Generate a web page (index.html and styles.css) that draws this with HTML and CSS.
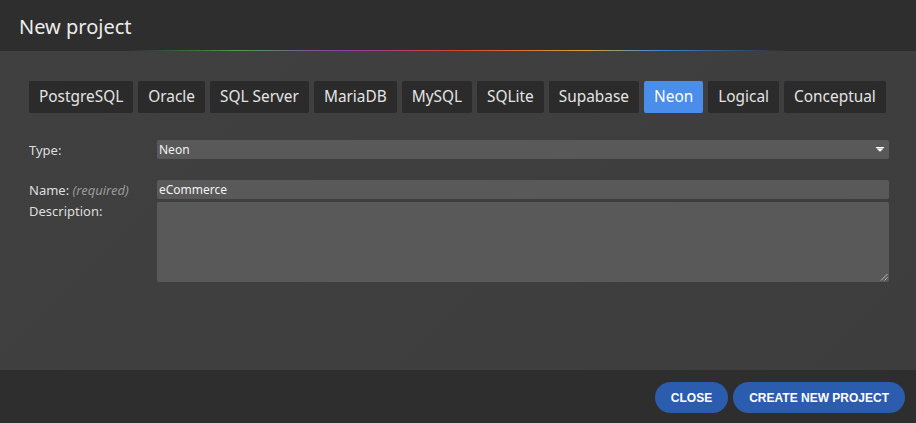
FILE: index.html
```html
<!DOCTYPE html>
<html lang="en">
<head>
<meta charset="utf-8">
<title>New project</title>
<link rel="stylesheet" href="styles.css">
</head>
<body>
<div class="dialog">
  <header class="header">
    <h1 class="title">New project</h1>
  </header>
  <div class="rainbow"></div>
  <main class="content">
    <nav class="tabs">
      <span class="tab">PostgreSQL</span>
      <span class="tab">Oracle</span>
      <span class="tab">SQL Server</span>
      <span class="tab">MariaDB</span>
      <span class="tab">MySQL</span>
      <span class="tab">SQLite</span>
      <span class="tab">Supabase</span>
      <span class="tab active">Neon</span>
      <span class="tab">Logical</span>
      <span class="tab">Conceptual</span>
    </nav>
    <div class="form">
      <div class="row type-row">
        <label class="label">Type:</label>
        <div class="select">
          <span class="select-value">Neon</span>
          <svg class="caret" width="8" height="5" viewBox="0 0 8 5"><rect x="0" y="0" width="8" height="1.2" fill="#fff"/><polygon points="0.5,1.5 7.5,1.5 4,4.8" fill="#fff"/></svg>
        </div>
      </div>
      <div class="row name-row">
        <label class="label">Name: <em class="hint">(required)</em></label>
        <div class="input">eCommerce</div>
      </div>
      <div class="row desc-row">
        <label class="label">Description:</label>
        <div class="textarea">
          <svg class="grip" width="8" height="8" viewBox="0 0 8 8"><line x1="1" y1="7.5" x2="7.5" y2="1" stroke="#bdbdbd" stroke-width="1"/><line x1="4.5" y1="7.5" x2="7.5" y2="4.5" stroke="#bdbdbd" stroke-width="1"/></svg>
        </div>
      </div>
    </div>
  </main>
  <footer class="footer">
    <button class="btn">CLOSE</button>
    <button class="btn">CREATE NEW PROJECT</button>
  </footer>
</div>
</body>
</html>
```
FILE: styles.css
```css
html, body {
  margin: 0;
  padding: 0;
  background: #2e2e2e;
}
body {
  font-family: "Noto Sans", "Open Sans", sans-serif;
  color: #e6e6e6;
}
.dialog {
  width: 916px;
  height: 423px;
  display: flex;
  flex-direction: column;
  overflow: hidden;
}
.header {
  height: 50px;
  background: #2e2e2e;
  padding-left: 19px;
  display: flex;
  align-items: center;
}
.title {
  margin: 0;
  font-size: 20px;
  font-weight: 400;
  color: #ececec;
  line-height: 1;
  padding-top: 3px;
}
.rainbow {
  height: 1px;
  background: linear-gradient(90deg,
    rgba(0,0,0,0) 14%,
    #4f9a4f 26%,
    #8a3fa8 37%,
    #d8442e 50%,
    #d9a23a 64%,
    #3f86d8 72%,
    rgba(63,134,216,0) 86%);
}
.content {
  flex: 1;
  background: linear-gradient(135deg, #404040, #3c3d3c);
  padding: 30px 27px 0 29px;
}
.tabs {
  display: flex;
  gap: 5px;
}
.tab {
  flex: none;
  white-space: nowrap;
  height: 32px;
  line-height: 32px;
  padding: 0 10px;
  background: #2b2b2b;
  border-radius: 2px;
  font-size: 15.4px;
  color: #e4e4e4;
}
.tab.active {
  background: #4a8dea;
  color: #fff;
}
.form {
  margin-top: 27px;
  font-size: 12px;
}
.row {
  display: flex;
}
.label {
  width: 128px;
  flex: none;
  font-size: 13px;
  color: #dedede;
  white-space: nowrap;
}
.hint {
  color: #9a9a9a;
}
.type-row {
  align-items: center;
}
.select {
  flex: 1;
  height: 19px;
  background: #595959;
  border-radius: 2px;
  display: flex;
  align-items: center;
  justify-content: space-between;
  padding: 0 5px 0 2px;
  color: #f2f2f2;
}
.caret {
  display: block;
}
.name-row {
  margin-top: 21px;
  align-items: center;
}
.input {
  flex: 1;
  height: 19px;
  line-height: 19px;
  background: #595959;
  border-radius: 2px;
  padding-left: 2px;
  color: #f2f2f2;
}
.desc-row {
  margin-top: 3px;
}
.textarea {
  flex: 1;
  height: 80px;
  background: #595959;
  border-radius: 2px;
  position: relative;
}
.grip {
  position: absolute;
  right: 1px;
  bottom: 1px;
}
.footer {
  height: 53px;
  background: #2e2e2e;
  display: flex;
  justify-content: flex-end;
  align-items: flex-start;
  gap: 5px;
  padding: 12px 11px 0 0;
  box-sizing: border-box;
}
.btn {
  height: 31px;
  padding: 0 16px;
  border: none;
  border-radius: 16px;
  background: #2c5cad;
  color: #fff;
  font-family: "Liberation Sans", Arial, sans-serif;
  font-weight: 700;
  font-size: 12px;
}
```
